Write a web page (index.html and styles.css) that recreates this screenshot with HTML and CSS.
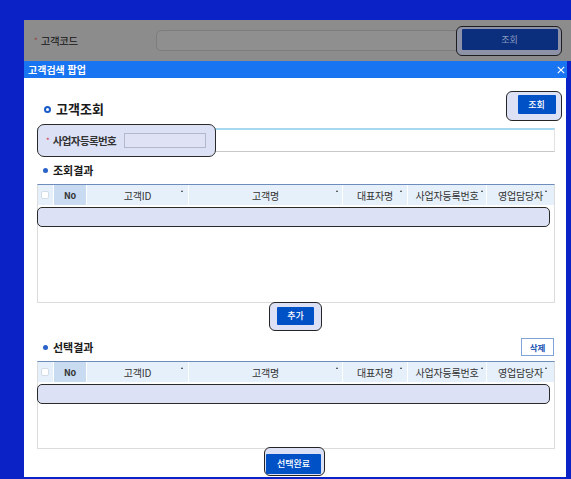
FILE: index.html
```html
<!DOCTYPE html>
<html lang="ko">
<head>
<meta charset="utf-8">
<link rel="stylesheet" href="styles.css">
</head>
<body>
<div class="page">
  <div class="topbar">
    <div class="toplabelwrap"><span class="req req-dim">*</span><span class="toplabel">고객코드</span></div>
    <span class="topinput"></span>
    <span class="hl hl-dim hl-top"><span class="btn btn-dim btn-top">조회</span></span>
  </div>
  <div class="popup">
    <div class="ptitle"><span>고객검색 팝업</span>
      <svg class="close" width="8" height="8" viewBox="0 0 8 8"><path d="M0.8 0.8L7.2 7.2M7.2 0.8L0.8 7.2" stroke="#fff" stroke-width="1.2" fill="none"/></svg>
    </div>
    <div class="pbody">
      <div class="headrow">
        <h2 class="htitle"><span class="ring"></span>고객조회</h2>
        <span class="hl hl-search"><span class="btn btn-search">조회</span></span>
      </div>
      <div class="srow">
        <div class="srow-hl"></div>
        <span class="req">*</span><span class="slabel">사업자등록번호</span><span class="sinput"></span>
      </div>
      <div class="sec"><span class="dot"></span>조회결과</div>
      <div class="grid g1">
        <div class="ghead">
          <div class="gc gc-check"><span class="cb"></span></div>
          <div class="gc gc-no">No</div>
          <div class="gc sort s5">고객ID</div>
          <div class="gc sort s4">고객명</div>
          <div class="gc sort s5">대표자명</div>
          <div class="gc sort s3">사업자등록번호</div>
          <div class="gc sort s7">영업담당자</div>
        </div>
        <div class="grow-hl"></div>
      </div>
      <div class="center"><span class="hl hl-add"><span class="btn btn-add">추가</span></span></div>
      <div class="sec sec2"><span class="sectext"><span class="dot"></span>선택결과</span><span class="btn-outline">삭제</span></div>
      <div class="grid g2">
        <div class="ghead">
          <div class="gc gc-check"><span class="cb"></span></div>
          <div class="gc gc-no">No</div>
          <div class="gc sort s5">고객ID</div>
          <div class="gc sort s4">고객명</div>
          <div class="gc sort s5">대표자명</div>
          <div class="gc sort s3">사업자등록번호</div>
          <div class="gc sort s7">영업담당자</div>
        </div>
        <div class="grow-hl"></div>
      </div>
      <div class="center center-done"><span class="hl hl-done"><span class="btn btn-done">선택완료</span></span></div>
    </div>
  </div>
</div>
</body>
</html>
```

FILE: styles.css
```css
* { box-sizing: border-box; }
html, body { margin: 0; padding: 0; }
body {
  background: #0a22c6;
  font-family: "Noto Sans CJK KR", "Noto Sans", "Liberation Sans", sans-serif;
  color: #222;
  width: 571px;
  height: 479px;
  overflow: hidden;
}
.page { padding: 20px 0 0 24px; }

/* top dimmed bar */
.topbar {
  width: 547px;
  height: 41px;
  background: #8c8c8c;
  display: flex;
  align-items: center;
  padding-left: 10px;
}
.toplabelwrap { width: 122px; display: flex; align-items: center; }
.req { color: #d03a4a; font-size: 8px; margin-right: 3px; line-height: 1; }
.req-dim { color: #9a3a3a; }
.toplabel { font-size: 10.5px; color: #141414; letter-spacing: -0.4px; }
.topinput {
  width: 304px;
  height: 21px;
  border: 1px solid #7d7d7d;
  border-radius: 5px;
  background: #8f8f8f;
}

.hl {
  display: inline-flex;
  border: 1.5px solid #252525;
  border-radius: 6px;
  background: #dde1f5;
}
.hl-dim { background: #8e92a6; border-color: #1e1e1e; }
.hl-top { margin-left: -4px; padding: 2.5px 3.5px 4.5px 4.5px; }

.btn {
  display: flex;
  align-items: center;
  justify-content: center;
  background: #0050c6;
  color: #fff;
  font-size: 9px;
  line-height: 1;
  border-radius: 1px;
  font-weight: 500;
}
.btn-dim { background: #0b2f7c; color: #8a9ac2; font-weight: normal; }
.btn-top { width: 96px; height: 21px; }

/* popup */
.popup { width: 542px; }
.ptitle {
  height: 17px;
  background: #1874f0;
  color: #fff;
  font-weight: bold;
  font-size: 10px;
  display: flex;
  align-items: center;
  justify-content: space-between;
  padding: 0 2px 0 4px;
  width: 543px;
}
.close { display: block; }
.pbody {
  background: #fff;
  height: 399px;
  padding: 13px 11px 0 13px;
}

.headrow {
  display: flex;
  justify-content: space-between;
  align-items: flex-start;
  height: 31px;
}
.htitle {
  margin: 10px 0 0 7px;
  font-size: 13px;
  line-height: 16px;
  font-weight: bold;
  display: flex;
  align-items: center;
  color: #1a1a1a;
}
.ring {
  width: 7px;
  height: 7px;
  border: 2px solid #1a5bc8;
  border-radius: 50%;
  margin-right: 5px;
}
.hl-search { margin-right: -7px; padding: 2.5px 5.5px 6.5px 10.5px; }
.btn-search { width: 38px; height: 19px; }

.srow {
  position: relative;
  margin-top: 6px;
  height: 24px;
  border-top: 2px solid #a6d8f0;
  border-bottom: 1px solid #c8c8c8;
  border-right: 1px solid #e2e2e2;
  display: flex;
  align-items: center;
  padding-left: 9px;
}
.srow-hl {
  position: absolute;
  left: 0;
  top: -6px;
  width: 179px;
  height: 33px;
  background: #dde1f5;
  border: 1.5px solid #2a2a2a;
  border-radius: 7px;
}
.srow .req, .slabel, .sinput { position: relative; }
.slabel { font-size: 10.5px; font-weight: bold; letter-spacing: -0.6px; color: #333; }
.sinput {
  margin-left: 8px;
  width: 82px;
  height: 15px;
  border: 1px solid #b4b8cc;
  background: #dfe2f4;
}

.sec {
  margin-top: 10px;
  margin-bottom: 6px;
  height: 16px;
  font-size: 11px;
  line-height: 16px;
  font-weight: bold;
  display: flex;
  align-items: center;
  padding-left: 6px;
  color: #1a1a1a;
}
.sectext { display: flex; align-items: center; }
.dot {
  width: 5px;
  height: 5px;
  border-radius: 50%;
  background: #2a62c8;
  margin-right: 5px;
}
.sec2 {
  margin-top: 7px;
  margin-bottom: 5px;
  height: 18px;
  justify-content: space-between;
}
.btn-outline {
  width: 33px;
  height: 18px;
  border: 1px solid #7fa2d8;
  color: #2456b4;
  font-size: 8.5px;
  font-weight: bold;
  display: flex;
  align-items: center;
  justify-content: center;
  margin-right: 1px;
  background: #fff;
}

.grid {
  border: 1px solid #dcdcdc;
  border-top: 1px solid #6e8cbc;
}
.g1 { height: 119px; }
.g2 { height: 88px; }
.ghead {
  display: grid;
  grid-template-columns: 16px 33px 102px 154px 65px 79px 67px;
  height: 20px;
  background: #e6f0fb;
}
.gc {
  position: relative;
  display: flex;
  align-items: center;
  justify-content: center;
  font-size: 10px;
  color: #333;
  border-right: 1px solid #fff;
  letter-spacing: -0.2px;
}
.gc:last-child { border-right: none; }
.gc-check { justify-content: flex-start; padding-left: 3px; }
.cb {
  width: 8px;
  height: 8px;
  border: 1px solid #d4dce6;
  border-radius: 2px;
  background: #fff;
}
.gc-no { background: #c8dbf0; font-weight: bold; font-size: 9px; }
.sort::after {
  content: "";
  position: absolute;
  top: 5px;
  width: 0;
  height: 0;
  border-left: 1.5px solid transparent;
  border-right: 1.5px solid transparent;
  border-bottom: 2.5px solid #333;
}
.s3::after { right: 3px; }
.s4::after { right: 4px; }
.s5::after { right: 5px; }
.s7::after { right: 7px; }

.grow-hl {
  margin: 2px 0 0 -1px;
  width: 513px;
  height: 20px;
  background: #dde1f5;
  border: 1.5px solid #2a2a2a;
  border-radius: 5px;
}

.center { display: flex; justify-content: center; margin-top: -1px; padding-right: 2px; }
.hl-add { padding: 3.5px 6.5px 5.5px 7.5px; }
.btn-add { width: 37px; height: 18px; }
.center-done { margin-top: -2px; padding-right: 4px; }
.hl-done { padding: 5.5px 2.5px 1px 1.5px; }
.btn-done { width: 55px; height: 20px; }
```
